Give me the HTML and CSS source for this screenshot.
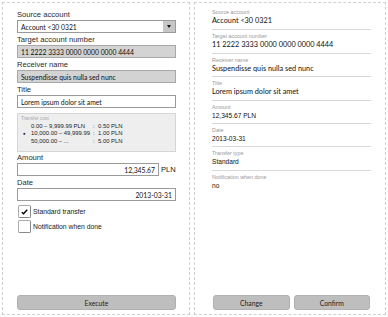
FILE: index.html
```html
<!DOCTYPE html>
<html>
<head>
    <meta name="viewport" content="width=device-width, initial-scale=1.0">
    <link rel="stylesheet" href="styles.css">
</head>
<body>
    <div class="screens">
        <!-- 表單 -->
        <div class="panel">
            <div class="field">
                <div class="label">Source account</div>
                <div class="input select">
                    <span class="value">Account &lt;30 0321</span>
                    <span class="select-button"><span class="arrow"></span></span>
                </div>
            </div>
            <div class="field">
                <div class="label">Target account number</div>
                <div class="input readonly"><span class="value">11 2222 3333 0000 0000 0000 4444</span></div>
            </div>
            <div class="field">
                <div class="label">Receiver name</div>
                <div class="input readonly"><span class="value">Suspendisse quis nulla sed nunc</span></div>
            </div>
            <div class="field">
                <div class="label">Title</div>
                <div class="input"><span class="value">Lorem ipsum dolor sit amet</span></div>
            </div>

            <div class="cost-box">
                <div class="cost-title">Transfer cost</div>
                <div class="cost-row"><span class="bullet"></span><span class="range">0.00 – 9,999.99 PLN</span><span class="colon">:</span><span>0.50 PLN</span></div>
                <div class="cost-row"><span class="bullet">●</span><span class="range">10,000.00 – 49,999.99</span><span class="colon">:</span><span>1.00 PLN</span></div>
                <div class="cost-row"><span class="bullet"></span><span class="range">50,000.00 – ...</span><span class="colon">:</span><span>5.00 PLN</span></div>
            </div>

            <div class="field">
                <div class="label">Amount</div>
                <div class="amount-row">
                    <div class="input right"><span class="value">12,345.67</span></div>
                    <span class="currency">PLN</span>
                </div>
            </div>
            <div class="field">
                <div class="label">Date</div>
                <div class="input right"><span class="value">2013-03-31</span></div>
            </div>

            <div class="checks">
                <div class="check-row">
                    <span class="checkbox">
                        <svg width="7" height="6" viewBox="0 0 7 6"><path d="M0.8 3.2 L2.6 4.8 L6.2 0.8" stroke="#000" stroke-width="1.4" fill="none" /></svg>
                    </span>
                    <span>Standard transfer</span>
                </div>
                <div class="check-row">
                    <span class="checkbox"></span>
                    <span>Notification when done</span>
                </div>
            </div>

            <div class="actions">
                <button>Execute</button>
            </div>
        </div>

        <!-- 確認 -->
        <div class="panel summary">
            <div class="item">
                <div class="item-label">Source account</div>
                <div class="item-value humanist">Account &lt;30 0321</div>
            </div>
            <div class="item">
                <div class="item-label">Target account number</div>
                <div class="item-value humanist">11 2222 3333 0000 0000 0000 4444</div>
            </div>
            <div class="item">
                <div class="item-label">Receiver name</div>
                <div class="item-value humanist">Suspendisse quis nulla sed nunc</div>
            </div>
            <div class="item">
                <div class="item-label">Title</div>
                <div class="item-value humanist">Lorem ipsum dolor sit amet</div>
            </div>
            <div class="item">
                <div class="item-label">Amount</div>
                <div class="item-value">12,345.67 PLN</div>
            </div>
            <div class="item">
                <div class="item-label">Date</div>
                <div class="item-value">2013-03-31</div>
            </div>
            <div class="item">
                <div class="item-label">Transfer type</div>
                <div class="item-value">Standard</div>
            </div>
            <div class="item last">
                <div class="item-label">Notification when done</div>
                <div class="item-value">no</div>
            </div>

            <div class="actions two">
                <button>Change</button>
                <button>Confirm</button>
            </div>
        </div>
    </div>
</body>
</html>
```

FILE: styles.css
```css
/* 全局樣式 */
body {
    font-family: 'Liberation Sans', Arial, sans-serif;
    margin: 0;
    padding: 0;
    background-color: #ffffff;
    color: #222;
}

.screens {
    display: flex;
    gap: 4px;
    padding: 2px;
    height: 317px;
    box-sizing: border-box;
}

.panel {
    flex: 1;
    border: 1px dashed #d0d0d0;
    display: flex;
    flex-direction: column;
    padding: 6px 13px 4px 14px;
}

/* 表單欄位 */
.field {
    margin-bottom: 1px;
}

.label {
    font-size: 7.6px;
    line-height: 11px;
    height: 11px;
    color: #2a2a2a;
}

.input {
    height: 13px;
    box-sizing: border-box;
    border: 1px solid #9a9a9a;
    background-color: #fff;
    display: flex;
    align-items: center;
    padding: 0 3px;
    font-family: Lato, sans-serif;
    font-size: 6.8px;
    color: #111;
    white-space: nowrap;
}

.select {
    padding-right: 0;
    justify-content: space-between;
}

.select-button {
    width: 12px;
    height: 11px;
    background-color: #c6c6c6;
    display: flex;
    align-items: center;
    justify-content: center;
}

.arrow {
    width: 0;
    height: 0;
    border-left: 2.5px solid transparent;
    border-right: 2.5px solid transparent;
    border-top: 3px solid #111;
}

.readonly {
    background-color: #d3d3d3;
    border-color: #a8a8a8;
}

.right {
    justify-content: flex-end;
}

/* 手續費 */
.cost-box {
    margin-top: 4px;
    height: 39px;
    box-sizing: border-box;
    background-color: #eeeeee;
    border: 1px solid #d6d6d6;
    padding: 1px 3px;
    font-size: 5.9px;
    color: #222;
    white-space: nowrap;
}

.cost-title {
    font-size: 4.8px;
    color: #aaa;
    line-height: 7px;
    margin-bottom: 1px;
}

.cost-row {
    display: flex;
    line-height: 7.4px;
}

.bullet {
    width: 8px;
    padding-left: 2px;
    font-size: 4.5px;
}

.range {
    width: 62px;
}

.colon {
    width: 5px;
}

.amount-row {
    display: flex;
    align-items: center;
}

.amount-row .input {
    flex: 1;
}

.currency {
    font-size: 7.6px;
    margin-left: 2px;
    width: 15px;
}

/* 核取方塊 */
.checks {
    margin-top: 3px;
    display: flex;
    flex-direction: column;
    gap: 2px;
}

.check-row {
    display: flex;
    align-items: center;
    font-size: 6.8px;
    height: 13px;
}

.checkbox {
    width: 13px;
    height: 13px;
    box-sizing: border-box;
    border: 1px solid #aaa;
    border-right-color: #888;
    border-bottom-color: #888;
    border-radius: 2px;
    background-color: #fff;
    display: flex;
    align-items: center;
    justify-content: center;
    margin-left: 1px;
    margin-right: 2px;
}

/* 按鈕 */
.actions {
    margin-top: auto;
    display: flex;
    gap: 4px;
}

.actions.two {
    padding: 0 1px;
}

button {
    flex: 1;
    height: 15px;
    background-color: #bebebe;
    border: 1px solid #b0b0b0;
    border-radius: 3px;
    font-family: Lato, sans-serif;
    font-size: 6.8px;
    color: #222;
    padding: 0;
    cursor: pointer;
}

/* 摘要 */
.summary {
    padding-left: 17px;
    padding-right: 14px;
    padding-top: 4px;
}

.item {
    border-bottom: 1px solid #d8d8d8;
    height: 23.4px;
    box-sizing: border-box;
    padding-top: 1px;
}

.item + .item {
    padding-top: 2px;
}

.item.last {
    border-bottom: none;
}

.item-label {
    font-size: 5.4px;
    color: #999;
    line-height: 8px;
}

.item-value {
    font-size: 6.6px;
    line-height: 10px;
    color: #111;
}

.humanist {
    font-family: Lato, sans-serif;
    font-size: 7.3px;
}
```
